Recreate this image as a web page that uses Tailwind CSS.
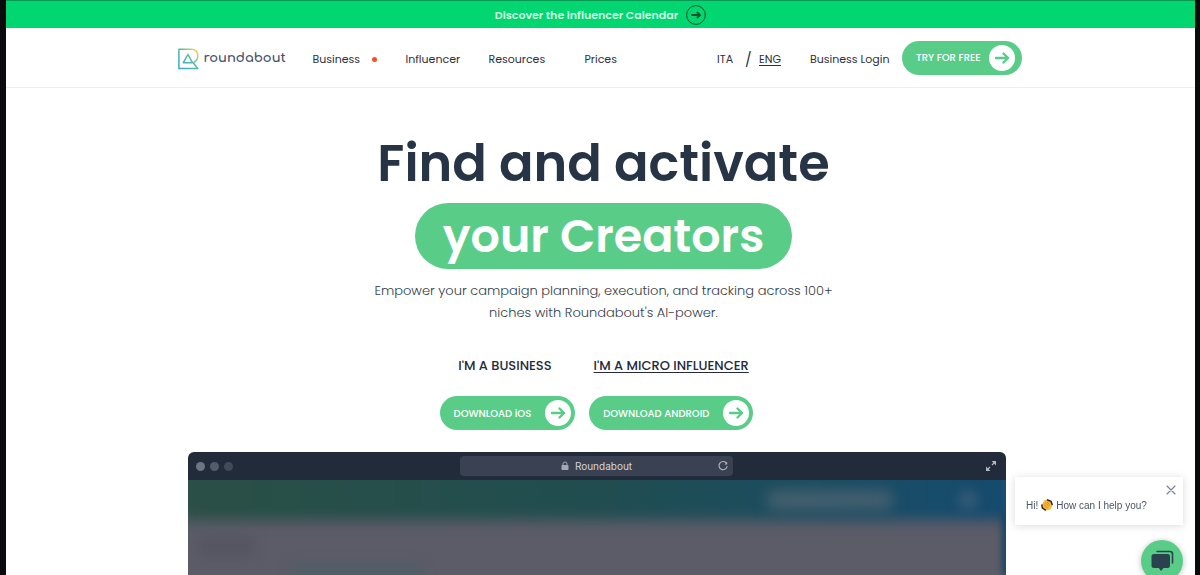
<!DOCTYPE html>
<html lang="en">
<head>
<meta charset="utf-8">
<meta name="viewport" content="width=device-width, initial-scale=1">
<title>Roundabout</title>
<script src="https://cdn.jsdelivr.net/npm/@tailwindcss/browser@4"></script>
</head>
<body class="flex min-h-screen flex-col border-r-[5px] border-l-[6px] border-[#0b0b0d] bg-white font-['Poppins','Inter',sans-serif] text-[#2b3443]">

<a href="#calendar" class="flex h-7 items-center justify-center gap-2 border-t border-[#069a52] bg-[#02d670] pt-px text-[11px] font-semibold text-[#d2fbe4]">
  Discover the influencer Calendar
  <svg class="size-5" viewBox="0 0 20 20" fill="none" stroke="#14532f" stroke-linecap="round" stroke-linejoin="round" aria-hidden="true">
    <circle cx="10" cy="10" r="9.4" stroke-width="1"/><path d="M6 10H14M11.300 7.500 14 10l-2.700 2.500" stroke-width="1.800"/>
  </svg>
</a>

<header class="border-b border-[#efeff2]">
  <div class="mx-auto flex h-[59px] max-w-[846px] items-center pr-0.5 text-[11px]">
    <a href="#home" class="flex w-[135px] items-center gap-1 pt-0.5 text-[13px] text-[#46526a]">
      <svg class="size-[22px]" viewBox="0 0 22 22" fill="none" stroke="url(#brand)" stroke-width="1.500" stroke-linejoin="round" aria-hidden="true">
        <defs><linearGradient id="brand" x1="2" y1="19" x2="19" y2="3" gradientUnits="userSpaceOnUse"><stop stop-color="#3fa3cf"/><stop offset=".55" stop-color="#55bda0"/><stop offset="1" stop-color="#ecd35a"/></linearGradient></defs>
        <path d="M14.500 14 19.800 20.500H.9V1.300H13C17.300 1.300 19.800 4 19.800 8c0 2.700-1.300 4.800-3.700 6.300M14.500 14.800H5.200L10 6.300z"/>
      </svg>
      <span class="font-['Comfortaa','Poppins','Inter',sans-serif] font-bold">roundabout</span>
    </a>
    <nav class="flex flex-1 items-center pt-1 text-[#2c3040]" aria-label="Main">
      <a href="#business" class="flex w-[93px] items-center gap-3">Business <span class="size-[5px] rounded-full bg-[#f4502f]"></span></a>
      <a href="#influencer" class="w-[83px]">Influencer</a>
      <a href="#resources" class="w-24">Resources</a>
      <a href="#prices" class="mr-auto">Prices</a>
      <a href="#ita" class="w-7">ITA</a>
      <span class="w-3.5 text-sm">/</span>
      <a href="#eng" class="w-[51px] underline underline-offset-2">ENG</a>
      <a href="#login" class="w-[92px] whitespace-nowrap">Business Login</a>
    </nav>
    <a href="#try" class="flex h-[34px] items-center gap-2 rounded-full bg-[#59cd88] pr-[7px] pl-3.5 text-[10px] font-medium whitespace-nowrap text-white">
      TRY FOR FREE
      <svg class="size-[26px]" viewBox="0 0 26 26" fill="none" aria-hidden="true"><circle cx="13" cy="13" r="13" fill="#fff"/><path d="M7 13h12M14.500 8.500 19 13l-4.500 4.500" stroke="#59cd88" stroke-width="2.400" stroke-linecap="round" stroke-linejoin="round"/></svg>
    </a>
  </div>
</header>

<main class="flex flex-1 flex-col">
  <section class="flex flex-col items-center pt-[43px] pl-1.5 text-center">
    <h1 class="flex flex-col items-center font-semibold">
      <span class="text-[51px] leading-[64px] text-[#273446]">Find and activate</span>
      <span class="mt-2 rounded-full bg-[#59cd88] px-7 text-[46px] leading-[66px] text-white">your Creators</span>
    </h1>
    <p class="mt-[11px] max-w-[470px] text-[13px] leading-[22px] font-light text-[#323d4a]">Empower your campaign planning, execution, and tracking across 100+ niches with Roundabout's AI-power.</p>
    <div class="mt-8 flex gap-[42px] text-[13px] leading-[20px] font-medium text-[#252b3b]">
      <button type="button">I'M A BUSINESS</button>
      <button type="button" class="underline underline-offset-2">I'M A MICRO INFLUENCER</button>
    </div>
    <div class="mt-5 flex gap-3.5 pr-3.5 text-[10px] font-medium text-white">
      <a href="#ios" class="flex h-[34px] items-center gap-3.5 rounded-full bg-[#59cd88] pr-1 pl-3.5">
        DOWNLOAD iOS
        <svg class="size-[26px]" viewBox="0 0 26 26" fill="none" aria-hidden="true"><circle cx="13" cy="13" r="13" fill="#fff"/><path d="M7 13h12M14.500 8.500 19 13l-4.500 4.500" stroke="#59cd88" stroke-width="2.400" stroke-linecap="round" stroke-linejoin="round"/></svg>
      </a>
      <a href="#android" class="flex h-[34px] items-center gap-3.5 rounded-full bg-[#59cd88] pr-1 pl-3.5">
        DOWNLOAD ANDROID
        <svg class="size-[26px]" viewBox="0 0 26 26" fill="none" aria-hidden="true"><circle cx="13" cy="13" r="13" fill="#fff"/><path d="M7 13h12M14.500 8.500 19 13l-4.500 4.500" stroke="#59cd88" stroke-width="2.400" stroke-linecap="round" stroke-linejoin="round"/></svg>
      </a>
    </div>
  </section>

  <section class="mt-[22px] flex flex-1 flex-col pr-2" aria-label="Product preview">
    <div class="mx-auto flex w-full max-w-[818px] flex-1 flex-col overflow-hidden rounded-t-md bg-[#222b3a]">
      <div class="grid h-7 grid-cols-[1fr_273px_1fr] items-center px-2">
        <div class="flex gap-[5px]">
          <span class="size-[9px] rounded-full bg-[#6d7484]"></span><span class="size-[9px] rounded-full bg-[#545b6b]"></span><span class="size-[9px] rounded-full bg-[#434a5a]"></span>
        </div>
        <div class="grid h-5 grid-cols-[1fr_auto_1fr] items-center rounded bg-[#394153] px-1 font-['Inter',sans-serif] text-[10px] text-[#d3d6dd]">
          <span class="col-start-2 flex items-center gap-1.5">
            <svg class="h-2.5 w-2" viewBox="0 0 8 10" aria-hidden="true"><rect x=".5" y="4" width="7" height="5" rx=".8" fill="#a3a8b5"/><path d="M2 4V3a2 2 0 0 1 4 0v1" fill="none" stroke="#a3a8b5" stroke-width="1"/></svg>
            Roundabout
          </span>
          <button type="button" aria-label="Reload" class="justify-self-end">
            <svg class="size-3" viewBox="0 0 12 12" fill="none" stroke="#b4b8c3" stroke-width="1.100" stroke-linecap="round"><path d="M9.500 3.300A4.100 4.100 0 1 0 10.100 6.500"/><path d="M10.200 1.800v2.700H7.500z" fill="#b4b8c3" stroke="none"/></svg>
          </button>
        </div>
        <button type="button" aria-label="Expand" class="justify-self-end">
          <svg class="size-3.5" viewBox="0 0 14 14" fill="none" stroke="#b4b8c3" stroke-width="1.200"><path d="m8 6 3-3M6 8l-3 3"/><path d="M7.600 2h4.400v4.400zM2 7.600v4.400h4.400z" fill="#b4b8c3" stroke="none"/></svg>
        </button>
      </div>
      <div class="relative min-h-[94px] flex-1 overflow-hidden bg-[#5c5c68]">
        <div class="absolute -inset-x-2 -top-4 h-[56px] bg-linear-to-r from-[#2a4f45] via-[#214d50] via-50% to-[#154b70] blur-[7px]"></div>
        <div class="absolute top-2.5 right-[112px] h-5 w-32 rounded-full bg-[#4e6470]/80 blur-[7px]"></div>
        <div class="absolute top-2.5 right-[28px] size-5 rounded-full bg-[#3c5f75]/80 blur-[6px]"></div>
        <div class="absolute top-14 left-2.5 h-5 w-14 bg-[#555562] blur-[6px]"></div>
        <div class="absolute top-[84px] left-[105px] h-4 w-32 bg-[#4e5d66] blur-[7px]"></div>
        <div class="absolute top-8 -right-1 bottom-0 w-2 bg-[#154464] blur-[3px]"></div>
      </div>
    </div>
  </section>
</main>

<aside class="fixed right-[17px] -bottom-[7px] flex flex-col items-end gap-[15px] font-['Liberation_Sans',sans-serif]" aria-label="Chat">
  <div class="relative flex h-12 w-[168px] items-center bg-white pt-2 pl-[11px] text-[10px] text-[#4b5666] shadow-[0_1px_8px_rgba(0,0,0,0.15)]">
    <p class="flex items-center gap-[3px] whitespace-nowrap">Hi!
      <svg class="size-3" viewBox="0 0 12 12" role="img" aria-label="Waving hand"><path d="M3 1.500 6.200.8 10 3l1.300 3.500-2 4L5.500 11.500 1.800 9 .9 5.500z" fill="#f6b93b"/><path d="M6 .8 10 2.400 11.400 6M.8 5.500l.5 3.400 3.500 2.400" fill="none" stroke="#2d2522" stroke-width="1.500"/><path d="M4 3.500 7.800 7M3 5.500 6.500 9M6 3l2.500 2.500" stroke="#bc7b1c" stroke-width=".7"/></svg>
      How can I help you?</p>
    <button type="button" aria-label="Close" class="absolute top-2 right-[7px]">
      <svg class="block size-2.5" viewBox="0 0 10 10" stroke="#71829a" stroke-width="1.100" stroke-linecap="round"><path d="m1 1 8 8M9 1 1 9"/></svg>
    </button>
  </div>
  <button type="button" aria-label="Open chat" class="grid size-[42px] place-items-center rounded-full bg-[#59cd88] shadow-[0_1px_6px_rgba(0,0,0,0.25)]">
    <svg class="size-6" viewBox="0 0 24 24" aria-hidden="true"><path d="M7 2.500h13a2.500 2.500 0 0 1 2.500 2.500v9" fill="none" stroke="#2c4150" stroke-width="1.600" stroke-linecap="round"/><path d="M4 5h13.500a2.500 2.500 0 0 1 2.500 2.500v9A2.500 2.500 0 0 1 17.500 19h-4L11 22 8.800 19H4a2.500 2.500 0 0 1-2.500-2.500v-9A2.500 2.500 0 0 1 4 5z" fill="#2c4150"/></svg>
  </button>
</aside>
</body>
</html>
